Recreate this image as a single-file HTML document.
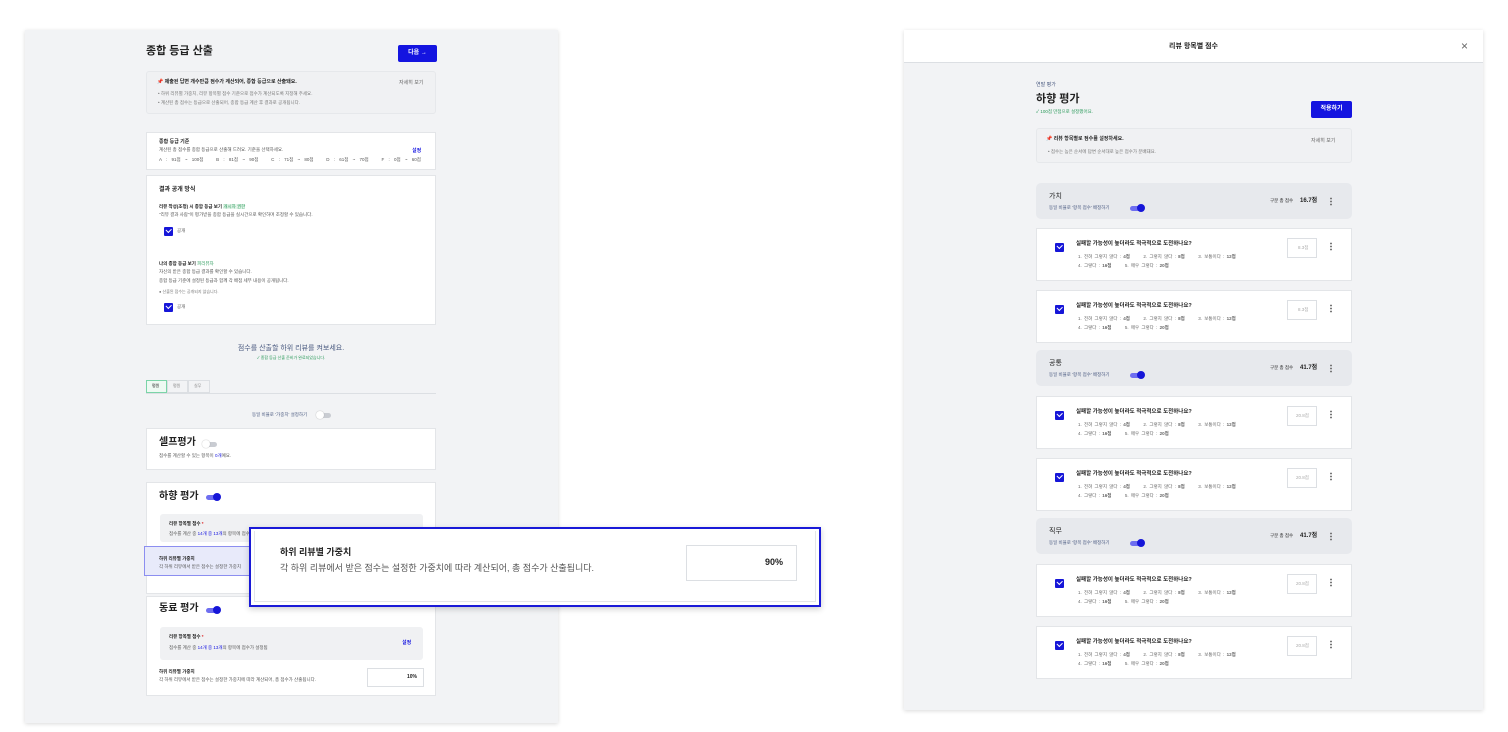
<!DOCTYPE html>
<html><head><meta charset="utf-8"><style>
*{margin:0;padding:0;box-sizing:border-box}
body{width:1508px;height:732px;background:#fff;position:relative;overflow:hidden;font-family:"Liberation Sans","Noto Sans CJK KR",sans-serif;color:#222}
.a{position:absolute}
.t{position:absolute;white-space:nowrap;line-height:1}
.card{position:absolute;background:#fff;border:1px solid #e3e5e8}
.gray{position:absolute;background:#f0f1f3;border:1px solid #e6e8eb;border-radius:3px}
.cb{position:absolute;width:9px;height:9px;background:#1616d8;border-radius:1px}
.cb:after{content:"";position:absolute;left:2px;top:1px;width:4px;height:2.5px;border-left:1.3px solid #fff;border-bottom:1.3px solid #fff;transform:rotate(-45deg)}
.tg{position:absolute;width:13px;height:5px;border-radius:3px;background:#6e6ef0}
.tg:after{content:"";position:absolute;right:-2px;top:-2px;width:8px;height:8px;border-radius:50%;background:#1616d8}
.tgo{position:absolute;width:13px;height:5px;border-radius:3px;background:#c9ccd2}
.tgo:after{content:"";position:absolute;left:-2px;top:-2px;width:8px;height:8px;border-radius:50%;background:#fff;box-shadow:0 0 1px #999}
.btn{position:absolute;background:#1414e0;color:#fff;border-radius:2px;font-size:6px;text-align:center;font-weight:bold}
.dots{position:absolute;width:2px;height:9px;background:radial-gradient(circle,#777 0.9px,transparent 1px) 0 0/2px 3px}
.item{position:absolute;left:1036px;width:316px;height:53px;background:#fff;border:1px solid #e3e5e8}
.grp{position:absolute;left:1036px;width:316px;height:36px;background:#e7e9ed;border-radius:5px}
</style></head><body>

<!-- LEFT PANEL -->
<div class="a" style="left:25px;top:30px;width:533px;height:693px;background:#f2f3f5;box-shadow:0 1px 4px rgba(0,0,0,.15)"></div>
<div class="t" style="left:146px;top:46px;font-size:11px;font-weight:bold">종합 등급 산출</div>
<div class="btn" style="left:398px;top:45px;width:39px;height:17px;line-height:17px">다음 →</div>

<div class="gray" style="left:146px;top:71px;width:290px;height:43px"></div>
<div class="t" style="left:157px;top:80px;font-size:5px;font-weight:bold"><span style="color:#d22">📌</span> 제출된 답변 개수만큼 점수가 계산되어, 종합 등급으로 산출돼요.</div>
<div class="t" style="left:399px;top:81px;font-size:5px;color:#666">자세히 보기</div>
<div class="t" style="left:158px;top:92px;font-size:4.5px;color:#777">• 하위 리뷰별 가중치, 리뷰 항목별 점수 기준으로 점수가 계산되도록 지정해 주세요.</div>
<div class="t" style="left:158px;top:101px;font-size:4.5px;color:#777">• 계산된 총 점수는 등급으로 산출되어, 종합 등급 계산 후 결과로 공개됩니다.</div>

<div class="card" style="left:146px;top:132px;width:290px;height:38px"></div>
<div class="t" style="left:159px;top:140px;font-size:5px;font-weight:bold">종합 등급 기준</div>
<div class="t" style="left:159px;top:148px;font-size:4.5px;color:#555">계산된 총 점수를 종합 등급으로 산출해 드려요. 기준을 선택하세요.</div>
<div class="t" style="left:159px;top:158px;font-size:4.5px;color:#555;word-spacing:3px">A : 91점 ~ 100점 &nbsp; B : 81점 ~ 90점 &nbsp; C : 71점 ~ 80점 &nbsp; D : 61점 ~ 70점 &nbsp; F : 0점 ~ 60점</div>
<div class="t" style="left:412px;top:149px;font-size:5px;color:#1414e0;font-weight:bold">설정</div>

<div class="card" style="left:146px;top:175px;width:290px;height:150px"></div>
<div class="t" style="left:159px;top:187px;font-size:6px;font-weight:bold">결과 공개 방식</div>
<div class="t" style="left:159px;top:205px;font-size:4.5px;font-weight:bold">리뷰 작성(조정) 시 종합 등급 보기 <span style="color:#2a9a5a;background:#e4f5ea;font-weight:normal">개시자 권한</span></div>
<div class="t" style="left:159px;top:213px;font-size:4.5px;color:#555">"리뷰 결과 사람"이 평가받을 종합 등급을 실시간으로 확인하며 조정할 수 있습니다.</div>
<div class="cb" style="left:164px;top:227px"></div>
<div class="t" style="left:177px;top:229px;font-size:4.5px;color:#555">공개</div>
<div class="t" style="left:159px;top:262px;font-size:4.5px;font-weight:bold">나의 종합 등급 보기 <span style="color:#2a9a5a;font-weight:normal">피리뷰자</span></div>
<div class="t" style="left:159px;top:270px;font-size:4.5px;color:#555">자신의 받은 종합 등급 결과를 확인할 수 있습니다.</div>
<div class="t" style="left:159px;top:279px;font-size:4.5px;color:#555">종합 등급 기준에 설정된 등급과 함께 각 배점 세부 내용이 공개됩니다.</div>
<div class="t" style="left:159px;top:290px;font-size:4px;color:#777">● 산출된 점수는 공개되지 않습니다.</div>
<div class="cb" style="left:164px;top:303px"></div>
<div class="t" style="left:177px;top:305px;font-size:4.5px;color:#555">공개</div>

<div class="t" style="left:146px;width:290px;text-align:center;top:345px;font-size:7px;color:#4a5a80">점수를 산출할 하위 리뷰를 켜보세요.</div>
<div class="t" style="left:146px;width:290px;text-align:center;top:356px;font-size:4px;color:#2a9a5a">✓ 종합 등급 산출 준비가 완료되었습니다.</div>

<div class="a" style="left:146px;top:380px;width:21px;height:13px;border:1px solid #7bd4a8;background:#eefaf3"></div>
<div class="t" style="left:152px;top:384px;font-size:4px">평원</div>
<div class="a" style="left:167px;top:380px;width:21px;height:13px;border:1px solid #dcdfe3"></div>
<div class="t" style="left:173px;top:384px;font-size:4px;color:#888">평원</div>
<div class="a" style="left:188px;top:380px;width:22px;height:13px;border:1px solid #dcdfe3"></div>
<div class="t" style="left:194px;top:384px;font-size:4px;color:#888">실무</div>
<div class="a" style="left:146px;top:393px;width:290px;height:1px;background:#dcdfe3"></div>

<div class="t" style="left:252px;top:413px;font-size:4.5px;color:#4a5a80">동일 비율로 '가중치' 설정하기</div>
<div class="tgo" style="left:318px;top:413px"></div>

<div class="card" style="left:146px;top:428px;width:290px;height:42px"></div>
<div class="t" style="left:159px;top:438px;font-size:10px;font-weight:bold">셀프평가</div>
<div class="tgo" style="left:204px;top:442px"></div>
<div class="t" style="left:159px;top:454px;font-size:4.5px;color:#555">점수를 계산할 수 있는 항목이 <span style="color:#1414e0">0개</span>예요.</div>

<div class="card" style="left:146px;top:482px;width:290px;height:112px"></div>
<div class="t" style="left:159px;top:492px;font-size:10px;font-weight:bold">하향 평가</div>
<div class="tg" style="left:206px;top:495px"></div>
<div class="gray" style="left:160px;top:514px;width:263px;height:28px;border:none"></div>
<div class="t" style="left:169px;top:522px;font-size:4.5px;font-weight:bold">리뷰 항목별 점수 <span style="color:#d22">*</span></div>
<div class="t" style="left:169px;top:532px;font-size:4.5px;color:#555">점수를 계산 중 <span style="color:#1414e0">14개 중 13개</span>의 항목에 점수가 설정됨</div>
<div class="a" style="left:144px;top:546px;width:110px;height:30px;background:#e8eafa;border:1px solid #8c8ef0"></div>
<div class="t" style="left:159px;top:557px;font-size:4.5px;font-weight:bold">하위 리뷰별 가중치</div>
<div class="t" style="left:159px;top:565px;font-size:4.5px;color:#555">각 하위 리뷰에서 받은 점수는 설정한 가중치</div>

<div class="card" style="left:146px;top:596px;width:290px;height:100px"></div>
<div class="t" style="left:159px;top:604px;font-size:10px;font-weight:bold">동료 평가</div>
<div class="tg" style="left:206px;top:608px"></div>
<div class="gray" style="left:160px;top:627px;width:263px;height:33px;border:none"></div>
<div class="t" style="left:169px;top:635px;font-size:4.5px;font-weight:bold">리뷰 항목별 점수 <span style="color:#d22">*</span></div>
<div class="t" style="left:169px;top:646px;font-size:4.5px;color:#555">점수를 계산 중 <span style="color:#1414e0">14개 중 13개</span>의 항목에 점수가 설정됨</div>
<div class="t" style="left:402px;top:641px;font-size:5px;color:#1414e0;font-weight:bold">설정</div>
<div class="t" style="left:159px;top:670px;font-size:4.5px;font-weight:bold">하위 리뷰별 가중치</div>
<div class="t" style="left:159px;top:678px;font-size:4.5px;color:#555">각 하위 리뷰에서 받은 점수는 설정한 가중치에 따라 계산되어, 총 점수가 산출됩니다.</div>
<div class="a" style="left:367px;top:668px;width:57px;height:19px;border:1px solid #dcdfe3;background:#fff"></div>
<div class="t" style="left:407px;top:675px;font-size:5px;font-weight:bold">10%</div>

<!-- POPUP -->
<div class="a" style="left:249px;top:527px;width:572px;height:80px;border:2px solid #1a1ad8;background:#fff;box-shadow:0 2px 6px rgba(0,0,0,.2)"></div>
<div class="a" style="left:254px;top:531px;width:562px;height:71px;border:1px solid #e3e5e8;border-top:none"></div>
<div class="t" style="left:280px;top:548px;font-size:9px;font-weight:bold">하위 리뷰별 가중치</div>
<div class="t" style="left:280px;top:564px;font-size:9px;color:#555">각 하위 리뷰에서 받은 점수는 설정한 가중치에 따라 계산되어, 총 점수가 산출됩니다.</div>
<div class="a" style="left:686px;top:545px;width:111px;height:36px;border:1px solid #dcdfe3"></div>
<div class="t" style="left:765px;top:558px;font-size:9px;font-weight:bold">90%</div>

<!-- RIGHT PANEL -->
<div class="a" style="left:904px;top:30px;width:579px;height:680px;background:#f2f3f5;box-shadow:0 1px 4px rgba(0,0,0,.15)"></div>
<div class="a" style="left:904px;top:30px;width:579px;height:33px;background:#fff;border-bottom:1px solid #dcdfe3"></div>
<div class="t" style="left:904px;width:579px;text-align:center;top:43px;font-size:7px;font-weight:bold">리뷰 항목별 점수</div>
<div class="t" style="left:1461px;top:40px;font-size:12px;color:#666">×</div>

<div class="t" style="left:1036px;top:83px;font-size:5px;color:#4a5a80">연말 평가</div>
<div class="t" style="left:1036px;top:94px;font-size:11px;font-weight:bold">하향 평가</div>
<div class="t" style="left:1036px;top:110px;font-size:4.5px;color:#2a9a5a">✓ 100점 만점으로 설정했어요.</div>
<div class="btn" style="left:1311px;top:101px;width:41px;height:17px;line-height:17px">적용하기</div>

<div class="gray" style="left:1036px;top:128px;width:316px;height:35px"></div>
<div class="t" style="left:1046px;top:137px;font-size:5px;font-weight:bold"><span style="color:#d22">📌</span> 리뷰 항목별로 점수를 설정하세요.</div>
<div class="t" style="left:1311px;top:139px;font-size:5px;color:#666">자세히 보기</div>
<div class="t" style="left:1048px;top:150px;font-size:4.5px;color:#777">• 점수는 높은 순서에 답변 순서대로 높은 점수가 분배돼요.</div>

<div class="grp" style="top:183px"></div>
<div class="t" style="left:1049px;top:193px;font-size:7px">가치</div>
<div class="t" style="left:1049px;top:206px;font-size:4.5px;color:#4a5a80">동일 비율로 '항목 점수' 배정하기</div>
<div class="tg" style="left:1130px;top:206px"></div>
<div class="t" style="left:1270px;top:199px;font-size:4.5px">구분 총 점수</div>
<div class="t" style="left:1300px;top:198px;font-size:6px;font-weight:bold">16.7점</div>
<div class="dots" style="left:1330px;top:197px"></div>

<div class="grp" style="top:350px"></div>
<div class="t" style="left:1049px;top:360px;font-size:7px">공통</div>
<div class="t" style="left:1049px;top:373px;font-size:4.5px;color:#4a5a80">동일 비율로 '항목 점수' 배정하기</div>
<div class="tg" style="left:1130px;top:373px"></div>
<div class="t" style="left:1270px;top:366px;font-size:4.5px">구분 총 점수</div>
<div class="t" style="left:1300px;top:365px;font-size:6px;font-weight:bold">41.7점</div>
<div class="dots" style="left:1330px;top:364px"></div>

<div class="grp" style="top:518px"></div>
<div class="t" style="left:1049px;top:528px;font-size:7px">직무</div>
<div class="t" style="left:1049px;top:541px;font-size:4.5px;color:#4a5a80">동일 비율로 '항목 점수' 배정하기</div>
<div class="tg" style="left:1130px;top:541px"></div>
<div class="t" style="left:1270px;top:534px;font-size:4.5px">구분 총 점수</div>
<div class="t" style="left:1300px;top:533px;font-size:6px;font-weight:bold">41.7점</div>
<div class="dots" style="left:1330px;top:532px"></div>

<!-- items -->
<div class="item" style="top:228px"></div>
<div class="item" style="top:290px"></div>
<div class="item" style="top:396px"></div>
<div class="item" style="top:458px"></div>
<div class="item" style="top:564px"></div>
<div class="item" style="top:626px"></div>

<div class="cb" style="left:1055px;top:243px"></div>
<div class="t" style="left:1076px;top:242px;font-size:5.5px;font-weight:bold">실패할 가능성이 높더라도 적극적으로 도전하나요?</div>
<div class="t" style="left:1078px;top:255px;font-size:4.5px;color:#666;word-spacing:1px">1. 전혀 그렇지 않다 : <b>4점</b> &nbsp;&nbsp;&nbsp;&nbsp; 2. 그렇지 않다 : <b>8점</b> &nbsp;&nbsp;&nbsp;&nbsp; 3. 보통이다 : <b>12점</b></div>
<div class="t" style="left:1078px;top:264px;font-size:4.5px;color:#666;word-spacing:1px">4. 그렇다 : <b>16점</b> &nbsp;&nbsp;&nbsp;&nbsp; 5. 매우 그렇다 : <b>20점</b></div>
<div class="a" style="left:1287px;top:238px;width:30px;height:20px;border:1px solid #dcdfe3"></div>
<div class="t" style="left:1298px;top:246px;font-size:4.5px;color:#aaa">8.3점</div>
<div class="dots" style="left:1330px;top:242px"></div>

<div class="cb" style="left:1055px;top:305px"></div>
<div class="t" style="left:1076px;top:304px;font-size:5.5px;font-weight:bold">실패할 가능성이 높더라도 적극적으로 도전하나요?</div>
<div class="t" style="left:1078px;top:317px;font-size:4.5px;color:#666;word-spacing:1px">1. 전혀 그렇지 않다 : <b>4점</b> &nbsp;&nbsp;&nbsp;&nbsp; 2. 그렇지 않다 : <b>8점</b> &nbsp;&nbsp;&nbsp;&nbsp; 3. 보통이다 : <b>12점</b></div>
<div class="t" style="left:1078px;top:326px;font-size:4.5px;color:#666;word-spacing:1px">4. 그렇다 : <b>16점</b> &nbsp;&nbsp;&nbsp;&nbsp; 5. 매우 그렇다 : <b>20점</b></div>
<div class="a" style="left:1287px;top:300px;width:30px;height:20px;border:1px solid #dcdfe3"></div>
<div class="t" style="left:1298px;top:308px;font-size:4.5px;color:#aaa">8.3점</div>
<div class="dots" style="left:1330px;top:304px"></div>

<div class="cb" style="left:1055px;top:411px"></div>
<div class="t" style="left:1076px;top:410px;font-size:5.5px;font-weight:bold">실패할 가능성이 높더라도 적극적으로 도전하나요?</div>
<div class="t" style="left:1078px;top:423px;font-size:4.5px;color:#666;word-spacing:1px">1. 전혀 그렇지 않다 : <b>4점</b> &nbsp;&nbsp;&nbsp;&nbsp; 2. 그렇지 않다 : <b>8점</b> &nbsp;&nbsp;&nbsp;&nbsp; 3. 보통이다 : <b>12점</b></div>
<div class="t" style="left:1078px;top:432px;font-size:4.5px;color:#666;word-spacing:1px">4. 그렇다 : <b>16점</b> &nbsp;&nbsp;&nbsp;&nbsp; 5. 매우 그렇다 : <b>20점</b></div>
<div class="a" style="left:1287px;top:406px;width:30px;height:20px;border:1px solid #dcdfe3"></div>
<div class="t" style="left:1296px;top:414px;font-size:4.5px;color:#aaa">20.8점</div>
<div class="dots" style="left:1330px;top:410px"></div>

<div class="cb" style="left:1055px;top:473px"></div>
<div class="t" style="left:1076px;top:472px;font-size:5.5px;font-weight:bold">실패할 가능성이 높더라도 적극적으로 도전하나요?</div>
<div class="t" style="left:1078px;top:485px;font-size:4.5px;color:#666;word-spacing:1px">1. 전혀 그렇지 않다 : <b>4점</b> &nbsp;&nbsp;&nbsp;&nbsp; 2. 그렇지 않다 : <b>8점</b> &nbsp;&nbsp;&nbsp;&nbsp; 3. 보통이다 : <b>12점</b></div>
<div class="t" style="left:1078px;top:494px;font-size:4.5px;color:#666;word-spacing:1px">4. 그렇다 : <b>16점</b> &nbsp;&nbsp;&nbsp;&nbsp; 5. 매우 그렇다 : <b>20점</b></div>
<div class="a" style="left:1287px;top:468px;width:30px;height:20px;border:1px solid #dcdfe3"></div>
<div class="t" style="left:1296px;top:476px;font-size:4.5px;color:#aaa">20.8점</div>
<div class="dots" style="left:1330px;top:472px"></div>

<div class="cb" style="left:1055px;top:579px"></div>
<div class="t" style="left:1076px;top:578px;font-size:5.5px;font-weight:bold">실패할 가능성이 높더라도 적극적으로 도전하나요?</div>
<div class="t" style="left:1078px;top:591px;font-size:4.5px;color:#666;word-spacing:1px">1. 전혀 그렇지 않다 : <b>4점</b> &nbsp;&nbsp;&nbsp;&nbsp; 2. 그렇지 않다 : <b>8점</b> &nbsp;&nbsp;&nbsp;&nbsp; 3. 보통이다 : <b>12점</b></div>
<div class="t" style="left:1078px;top:600px;font-size:4.5px;color:#666;word-spacing:1px">4. 그렇다 : <b>16점</b> &nbsp;&nbsp;&nbsp;&nbsp; 5. 매우 그렇다 : <b>20점</b></div>
<div class="a" style="left:1287px;top:574px;width:30px;height:20px;border:1px solid #dcdfe3"></div>
<div class="t" style="left:1296px;top:582px;font-size:4.5px;color:#aaa">20.8점</div>
<div class="dots" style="left:1330px;top:578px"></div>

<div class="cb" style="left:1055px;top:641px"></div>
<div class="t" style="left:1076px;top:640px;font-size:5.5px;font-weight:bold">실패할 가능성이 높더라도 적극적으로 도전하나요?</div>
<div class="t" style="left:1078px;top:653px;font-size:4.5px;color:#666;word-spacing:1px">1. 전혀 그렇지 않다 : <b>4점</b> &nbsp;&nbsp;&nbsp;&nbsp; 2. 그렇지 않다 : <b>8점</b> &nbsp;&nbsp;&nbsp;&nbsp; 3. 보통이다 : <b>12점</b></div>
<div class="t" style="left:1078px;top:662px;font-size:4.5px;color:#666;word-spacing:1px">4. 그렇다 : <b>16점</b> &nbsp;&nbsp;&nbsp;&nbsp; 5. 매우 그렇다 : <b>20점</b></div>
<div class="a" style="left:1287px;top:636px;width:30px;height:20px;border:1px solid #dcdfe3"></div>
<div class="t" style="left:1296px;top:644px;font-size:4.5px;color:#aaa">20.8점</div>
<div class="dots" style="left:1330px;top:640px"></div>

</body></html>
